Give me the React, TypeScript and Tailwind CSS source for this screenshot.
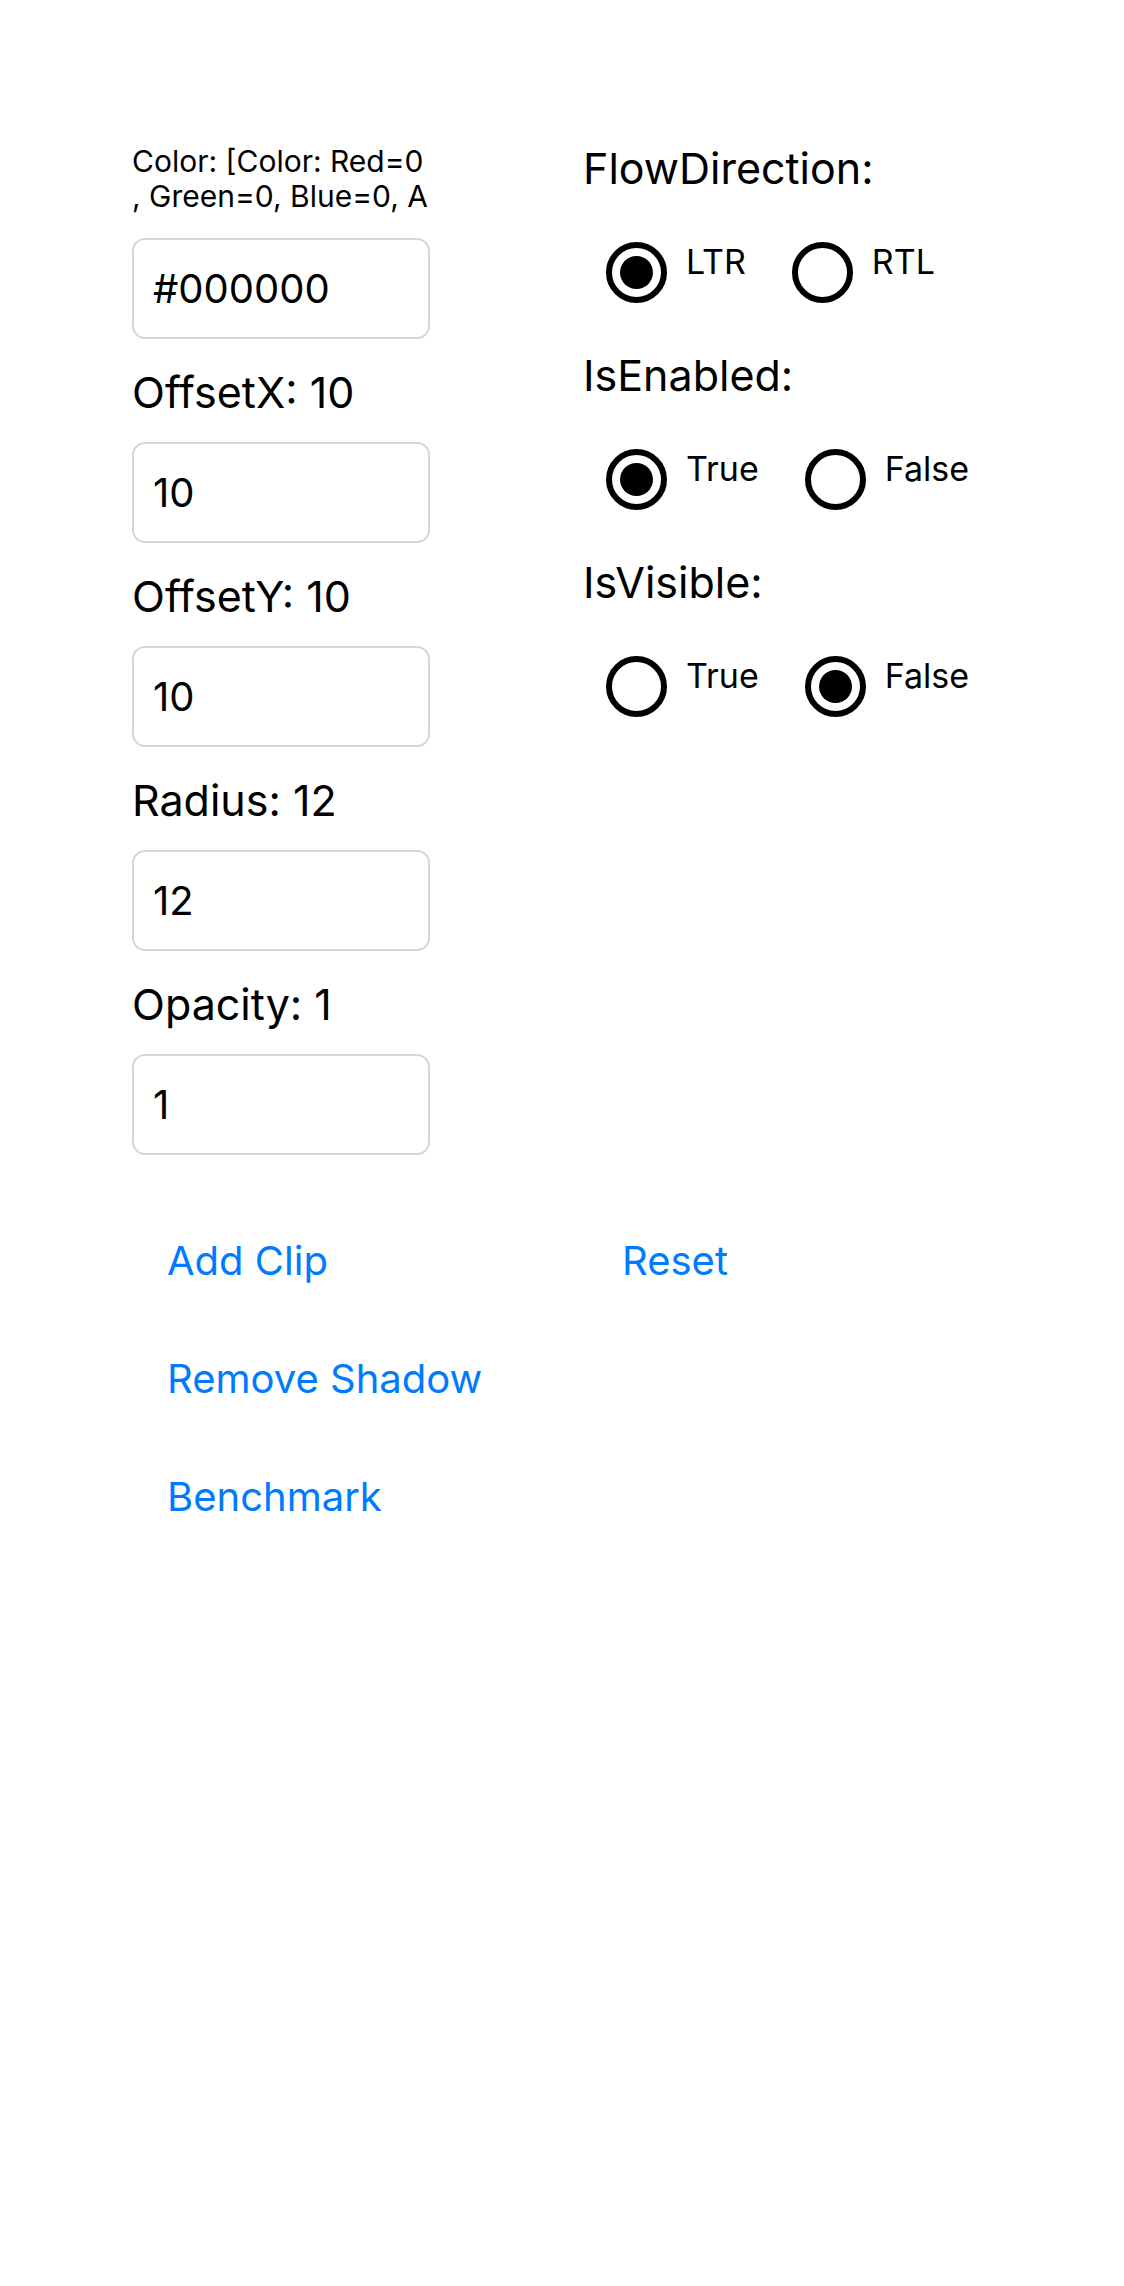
const font = { fontFamily: "Inter, 'Noto Sans', sans-serif" };

const fields = [
  { label: "OffsetX: 10", value: "10" },
  { label: "OffsetY: 10", value: "10" },
  { label: "Radius: 12", value: "12" },
  { label: "Opacity: 1", value: "1" },
];

const groups = [
  { label: "FlowDirection:", options: ["LTR", "RTL"], selected: 0 },
  { label: "IsEnabled:", options: ["True", "False"], selected: 0 },
  { label: "IsVisible:", options: ["True", "False"], selected: 1 },
];

function Entry({ value }: { value: string }) {
  return (
    <div className="flex h-[101px] w-[298px] items-center rounded-[13px] border-2 border-[#d6d6d6] pl-[19px] text-[40px] text-black">
      {value}
    </div>
  );
}

function Radio({ text, checked }: { text: string; checked: boolean }) {
  return (
    <div className="flex items-start gap-[19px]">
      <span className="flex h-[61px] w-[61px] items-center justify-center rounded-full border-[6px] border-black">
        {checked && <span className="h-[33px] w-[33px] rounded-full bg-black" />}
      </span>
      <span className="text-[34px] leading-[40px] text-black">{text}</span>
    </div>
  );
}

export default function App() {
  return (
    <div className="min-h-[2286px] bg-white pl-[132px] pt-[144px]" style={font}>
      <div className="flex">
        {/* colonna sinistra: campi di testo */}
        <div className="flex w-[298px] flex-col">
          <div className="text-[30px] leading-[34.5px] whitespace-nowrap text-black">
            <div>Color: [Color: Red=0</div>
            <div>, Green=0, Blue=0, A</div>
          </div>
          <div className="mt-[25px]">
            <Entry value="#000000" />
          </div>
          {fields.map((f) => (
            <div key={f.label} className="flex flex-col">
              <div className="mb-[26px] mt-[29px] whitespace-nowrap text-[43px] leading-[48px] text-black">{f.label}</div>
              <Entry value={f.value} />
            </div>
          ))}
        </div>

        {/* colonna destra: gruppi di radio */}
        <div className="ml-[153px] flex flex-col">
          {groups.map((g) => (
            <div key={g.label} className="flex flex-col pb-[48px]">
              <div className="text-[43px] leading-[48px] text-black">{g.label}</div>
              <div className="mt-[50px] flex gap-[46px] pl-[23px]">
                {g.options.map((o, i) => (
                  <Radio key={o} text={o} checked={i === g.selected} />
                ))}
              </div>
            </div>
          ))}
        </div>
      </div>

      <div className="mt-[82px] grid grid-cols-[455px_auto] gap-y-[70px] pl-[35px] text-[40px] leading-[48px] text-[#007aff]">
        <button className="text-left">Add Clip</button>
        <button className="text-left">Reset</button>
        <button className="text-left">Remove Shadow</button>
        <span />
        <button className="text-left">Benchmark</button>
      </div>
    </div>
  );
}
